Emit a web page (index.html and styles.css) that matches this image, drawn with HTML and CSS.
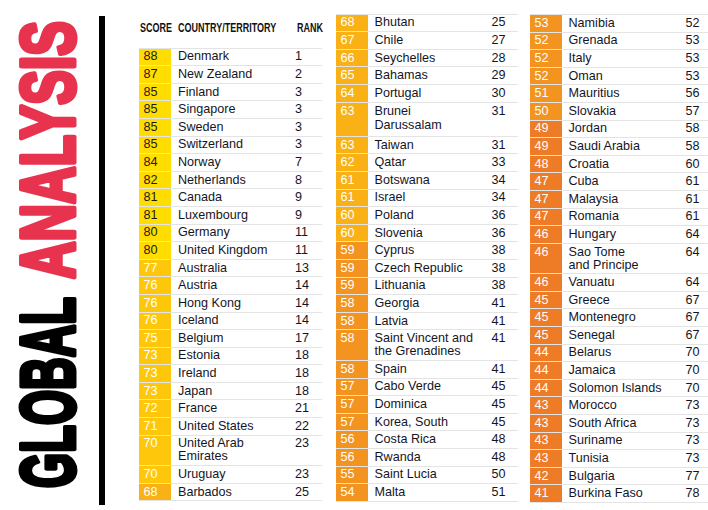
FILE: index.html
```html
<!DOCTYPE html>
<html lang="en">
<head>
<meta charset="utf-8">
<title>Global Analysis</title>
<link rel="stylesheet" href="styles.css">
</head>
<body>
<div class="page">
  <svg class="title" width="99" height="510" viewBox="0 0 99 510" aria-label="Global Analysis">
    <g transform="rotate(-90)" class="title-text">
      <text transform="scale(0.595 1)" x="-820" y="74" class="t-black">GLOBAL</text>
      <text transform="scale(0.684 1)" x="-408" y="74" class="t-red">ANALYSIS</text>
    </g>
  </svg>
  <div class="rule"></div>
  <div class="tables">
    <div class="col col1">
      <div class="head">
        <span class="h-score"><span class="squeeze">SCORE</span></span>
        <span class="h-name"><span class="squeeze">COUNTRY/TERRITORY</span></span>
        <span class="h-rank"><span class="squeeze">RANK</span></span>
      </div>
      <div class="table">
        <div class="row"><span class="score s80">88</span><span class="name">Denmark</span><span class="rank">1</span></div>
        <div class="row"><span class="score s80">87</span><span class="name">New Zealand</span><span class="rank">2</span></div>
        <div class="row"><span class="score s80">85</span><span class="name">Finland</span><span class="rank">3</span></div>
        <div class="row"><span class="score s80">85</span><span class="name">Singapore</span><span class="rank">3</span></div>
        <div class="row"><span class="score s80">85</span><span class="name">Sweden</span><span class="rank">3</span></div>
        <div class="row"><span class="score s80">85</span><span class="name">Switzerland</span><span class="rank">3</span></div>
        <div class="row"><span class="score s80">84</span><span class="name">Norway</span><span class="rank">7</span></div>
        <div class="row"><span class="score s80">82</span><span class="name">Netherlands</span><span class="rank">8</span></div>
        <div class="row"><span class="score s80">81</span><span class="name">Canada</span><span class="rank">9</span></div>
        <div class="row"><span class="score s80">81</span><span class="name">Luxembourg</span><span class="rank">9</span></div>
        <div class="row"><span class="score s80">80</span><span class="name">Germany</span><span class="rank">11</span></div>
        <div class="row"><span class="score s80">80</span><span class="name">United Kingdom</span><span class="rank">11</span></div>
        <div class="row"><span class="score s70">77</span><span class="name">Australia</span><span class="rank">13</span></div>
        <div class="row"><span class="score s70">76</span><span class="name">Austria</span><span class="rank">14</span></div>
        <div class="row"><span class="score s70">76</span><span class="name">Hong Kong</span><span class="rank">14</span></div>
        <div class="row"><span class="score s70">76</span><span class="name">Iceland</span><span class="rank">14</span></div>
        <div class="row"><span class="score s70">75</span><span class="name">Belgium</span><span class="rank">17</span></div>
        <div class="row"><span class="score s70">73</span><span class="name">Estonia</span><span class="rank">18</span></div>
        <div class="row"><span class="score s70">73</span><span class="name">Ireland</span><span class="rank">18</span></div>
        <div class="row"><span class="score s70">73</span><span class="name">Japan</span><span class="rank">18</span></div>
        <div class="row"><span class="score s70">72</span><span class="name">France</span><span class="rank">21</span></div>
        <div class="row"><span class="score s70">71</span><span class="name">United States</span><span class="rank">22</span></div>
        <div class="row"><span class="score s70">70</span><span class="name">United Arab<br>Emirates</span><span class="rank">23</span></div>
        <div class="row"><span class="score s70">70</span><span class="name">Uruguay</span><span class="rank">23</span></div>
        <div class="row"><span class="score s60">68</span><span class="name">Barbados</span><span class="rank">25</span></div>
      </div>
    </div>
    <div class="col col2">
      <div class="table">
        <div class="row"><span class="score s60">68</span><span class="name">Bhutan</span><span class="rank">25</span></div>
        <div class="row"><span class="score s60">67</span><span class="name">Chile</span><span class="rank">27</span></div>
        <div class="row"><span class="score s60">66</span><span class="name">Seychelles</span><span class="rank">28</span></div>
        <div class="row"><span class="score s60">65</span><span class="name">Bahamas</span><span class="rank">29</span></div>
        <div class="row"><span class="score s60">64</span><span class="name">Portugal</span><span class="rank">30</span></div>
        <div class="row tall"><span class="score s60">63</span><span class="name">Brunei<br>Darussalam</span><span class="rank">31</span></div>
        <div class="row"><span class="score s60">63</span><span class="name">Taiwan</span><span class="rank">31</span></div>
        <div class="row"><span class="score s60">62</span><span class="name">Qatar</span><span class="rank">33</span></div>
        <div class="row"><span class="score s60">61</span><span class="name">Botswana</span><span class="rank">34</span></div>
        <div class="row"><span class="score s60">61</span><span class="name">Israel</span><span class="rank">34</span></div>
        <div class="row"><span class="score s60">60</span><span class="name">Poland</span><span class="rank">36</span></div>
        <div class="row"><span class="score s60">60</span><span class="name">Slovenia</span><span class="rank">36</span></div>
        <div class="row"><span class="score s50">59</span><span class="name">Cyprus</span><span class="rank">38</span></div>
        <div class="row"><span class="score s50">59</span><span class="name">Czech Republic</span><span class="rank">38</span></div>
        <div class="row"><span class="score s50">59</span><span class="name">Lithuania</span><span class="rank">38</span></div>
        <div class="row"><span class="score s50">58</span><span class="name">Georgia</span><span class="rank">41</span></div>
        <div class="row"><span class="score s50">58</span><span class="name">Latvia</span><span class="rank">41</span></div>
        <div class="row"><span class="score s50">58</span><span class="name">Saint Vincent and<br>the Grenadines</span><span class="rank">41</span></div>
        <div class="row"><span class="score s50">58</span><span class="name">Spain</span><span class="rank">41</span></div>
        <div class="row"><span class="score s50">57</span><span class="name">Cabo Verde</span><span class="rank">45</span></div>
        <div class="row"><span class="score s50">57</span><span class="name">Dominica</span><span class="rank">45</span></div>
        <div class="row"><span class="score s50">57</span><span class="name">Korea, South</span><span class="rank">45</span></div>
        <div class="row"><span class="score s50">56</span><span class="name">Costa Rica</span><span class="rank">48</span></div>
        <div class="row"><span class="score s50">56</span><span class="name">Rwanda</span><span class="rank">48</span></div>
        <div class="row"><span class="score s50">55</span><span class="name">Saint Lucia</span><span class="rank">50</span></div>
        <div class="row"><span class="score s50">54</span><span class="name">Malta</span><span class="rank">51</span></div>
      </div>
    </div>
    <div class="col col3">
      <div class="table">
        <div class="row"><span class="score s50">53</span><span class="name">Namibia</span><span class="rank">52</span></div>
        <div class="row"><span class="score s50">52</span><span class="name">Grenada</span><span class="rank">53</span></div>
        <div class="row"><span class="score s50">52</span><span class="name">Italy</span><span class="rank">53</span></div>
        <div class="row"><span class="score s50">52</span><span class="name">Oman</span><span class="rank">53</span></div>
        <div class="row"><span class="score s50">51</span><span class="name">Mauritius</span><span class="rank">56</span></div>
        <div class="row"><span class="score s50">50</span><span class="name">Slovakia</span><span class="rank">57</span></div>
        <div class="row"><span class="score s40">49</span><span class="name">Jordan</span><span class="rank">58</span></div>
        <div class="row"><span class="score s40">49</span><span class="name">Saudi Arabia</span><span class="rank">58</span></div>
        <div class="row"><span class="score s40">48</span><span class="name">Croatia</span><span class="rank">60</span></div>
        <div class="row"><span class="score s40">47</span><span class="name">Cuba</span><span class="rank">61</span></div>
        <div class="row"><span class="score s40">47</span><span class="name">Malaysia</span><span class="rank">61</span></div>
        <div class="row"><span class="score s40">47</span><span class="name">Romania</span><span class="rank">61</span></div>
        <div class="row"><span class="score s40">46</span><span class="name">Hungary</span><span class="rank">64</span></div>
        <div class="row"><span class="score s40">46</span><span class="name">Sao Tome<br>and Principe</span><span class="rank">64</span></div>
        <div class="row"><span class="score s40">46</span><span class="name">Vanuatu</span><span class="rank">64</span></div>
        <div class="row"><span class="score s40">45</span><span class="name">Greece</span><span class="rank">67</span></div>
        <div class="row"><span class="score s40">45</span><span class="name">Montenegro</span><span class="rank">67</span></div>
        <div class="row"><span class="score s40">45</span><span class="name">Senegal</span><span class="rank">67</span></div>
        <div class="row"><span class="score s40">44</span><span class="name">Belarus</span><span class="rank">70</span></div>
        <div class="row"><span class="score s40">44</span><span class="name">Jamaica</span><span class="rank">70</span></div>
        <div class="row"><span class="score s40">44</span><span class="name">Solomon Islands</span><span class="rank">70</span></div>
        <div class="row"><span class="score s40">43</span><span class="name">Morocco</span><span class="rank">73</span></div>
        <div class="row"><span class="score s40">43</span><span class="name">South Africa</span><span class="rank">73</span></div>
        <div class="row"><span class="score s40">43</span><span class="name">Suriname</span><span class="rank">73</span></div>
        <div class="row"><span class="score s40">43</span><span class="name">Tunisia</span><span class="rank">73</span></div>
        <div class="row"><span class="score s40">42</span><span class="name">Bulgaria</span><span class="rank">77</span></div>
        <div class="row"><span class="score s40">41</span><span class="name">Burkina Faso</span><span class="rank">78</span></div>
      </div>
    </div>
  </div>
</div>
</body>
</html>
```

FILE: styles.css
```css
html, body {
  margin: 0;
  padding: 0;
  background: #ffffff;
}

.page {
  display: flex;
  align-items: flex-start;
  width: 708px;
  height: 510px;
  overflow: hidden;
  font-family: "Liberation Sans", Arial, sans-serif;
  color: #15151f;
}

.title {
  display: block;
  flex: none;
}

.title-text {
  font-family: "Liberation Sans", Arial, sans-serif;
  font-weight: bold;
  font-size: 76px;
}

.t-black {
  fill: #000000;
  stroke: #000000;
  stroke-width: 5px;
  stroke-linejoin: round;
}

.t-red {
  fill: #e8334f;
  stroke: #e8334f;
  stroke-width: 5px;
  stroke-linejoin: round;
}

.rule {
  flex: none;
  width: 6px;
  height: 489px;
  margin-top: 16px;
  background: #000000;
}

.tables {
  display: flex;
  align-items: flex-start;
  padding-top: 13.6px;
  margin-left: 34px;
}

.col {
  flex: none;
}

.col1 {
  width: 183px;
}

.col2 {
  width: 182px;
  margin-left: 14px;
}

.col3 {
  width: 183px;
  margin-left: 12px;
  padding-top: 0.4px;
}

.head {
  display: grid;
  grid-template-columns: 32px 124px 1fr;
  height: 34px;
  box-sizing: border-box;
  padding-top: 8.5px;
  font-size: 12px;
  line-height: 12px;
  font-weight: bold;
  color: #111111;
  white-space: nowrap;
}

.h-score {
  padding-left: 1px;
}

.h-name {
  padding-left: 7px;
}

.h-rank {
  padding-left: 2px;
}

.squeeze {
  display: inline-block;
  transform: scaleX(0.75);
  transform-origin: left center;
}

.table {
  border-bottom: 1px solid #e4e4e4;
}

.row {
  display: grid;
  grid-template-columns: 32px 123.5px 1fr;
  border-top: 1px solid #e4e4e4;
  font-size: 12.6px;
  line-height: 13px;
}

.col1 .row {
  grid-template-columns: 32px 124px 1fr;
}

.score {
  padding: 1.8px 0 1.8px 4.5px;
  color: #ffffff;
}

.name {
  padding: 1.8px 0 1.8px 6.5px;
  white-space: nowrap;
}

.col1 .name {
  padding-left: 7px;
}

.rank {
  padding: 1.8px 0 1.8px 0;
}

.row.tall {
  line-height: 14px;
}

.row.tall .name {
  padding-bottom: 3.5px;
}

.s80 {
  background: #ffdd00;
  color: #1a1a1a;
}

.s70 {
  background: #ffc70b;
}

.s60 {
  background: #f9b116;
}

.s50 {
  background: #f39420;
}

.s40 {
  background: #ee7b25;
}
```
